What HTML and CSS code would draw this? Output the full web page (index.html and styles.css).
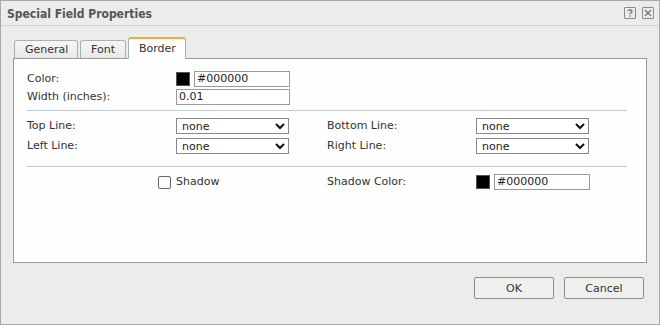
FILE: index.html
```html
<!DOCTYPE html>
<html>
<head>
<meta charset="utf-8">
<link rel="stylesheet" href="styles.css">
</head>
<body>
<div class="dialog">
  <div class="titlebar">
    <span class="title">Special Field Properties</span>
    <div class="title-icons">
      <span class="ticon">
        <svg width="10" height="10" viewBox="0 0 10 10"><path d="M3 3.2 C3 1.6 7 1.6 7 3.4 C7 4.8 5 4.8 5 6.3" fill="none" stroke="#777" stroke-width="1.4"/><rect x="4.3" y="7.3" width="1.4" height="1.4" fill="#777"/></svg>
      </span>
      <span class="ticon">
        <svg width="10" height="10" viewBox="0 0 10 10"><path d="M2 2 L8 8 M8 2 L2 8" stroke="#777" stroke-width="1.4"/></svg>
      </span>
    </div>
  </div>
  <div class="body">
    <div class="tabs">
      <div class="tab">General</div>
      <div class="tab">Font</div>
      <div class="tab active">Border</div>
    </div>
    <div class="panel">
      <div class="grid top">
        <div class="label">Color:</div>
        <div class="ctrl span3">
          <span class="swatch"></span>
          <span class="input short">#000000</span>
        </div>
        <div class="label">Width (inches):</div>
        <div class="ctrl span3"><span class="input wide">0.01</span></div>
      </div>
      <div class="sep"></div>
      <div class="grid lines">
        <div class="label">Top Line:</div>
        <div class="ctrl"><span class="select"><span>none</span><svg width="10" height="7" viewBox="0 0 10 7"><path d="M1 1 L5 5 L9 1" fill="none" stroke="#111" stroke-width="2"/></svg></span></div>
        <div class="label">Bottom Line:</div>
        <div class="ctrl"><span class="select"><span>none</span><svg width="10" height="7" viewBox="0 0 10 7"><path d="M1 1 L5 5 L9 1" fill="none" stroke="#111" stroke-width="2"/></svg></span></div>
        <div class="label">Left Line:</div>
        <div class="ctrl"><span class="select"><span>none</span><svg width="10" height="7" viewBox="0 0 10 7"><path d="M1 1 L5 5 L9 1" fill="none" stroke="#111" stroke-width="2"/></svg></span></div>
        <div class="label">Right Line:</div>
        <div class="ctrl"><span class="select"><span>none</span><svg width="10" height="7" viewBox="0 0 10 7"><path d="M1 1 L5 5 L9 1" fill="none" stroke="#111" stroke-width="2"/></svg></span></div>
      </div>
      <div class="sep sep2"></div>
      <div class="grid shadow">
        <div class="check-cell"><span class="checkbox"></span></div>
        <div class="label">Shadow</div>
        <div class="label">Shadow Color:</div>
        <div class="ctrl">
          <span class="swatch"></span>
          <span class="input short">#000000</span>
        </div>
      </div>
    </div>
    <div class="buttons">
      <button class="btn">OK</button>
      <button class="btn">Cancel</button>
    </div>
  </div>
</div>
</body>
</html>
```
FILE: styles.css
```css
html, body {
  margin: 0;
  padding: 0;
}
body {
  width: 660px;
  height: 325px;
  font-family: "DejaVu Sans", "Liberation Sans", sans-serif;
  font-size: 11px;
  color: #333;
}
.dialog {
  box-sizing: border-box;
  width: 660px;
  height: 325px;
  border: 1px solid #a8a8a8;
  background: #ececea;
  display: flex;
  flex-direction: column;
}
.titlebar {
  height: 24px;
  border-bottom: 1px solid #d2d2d0;
  display: flex;
  align-items: center;
  justify-content: space-between;
  padding: 0 5px 0 6px;
}
.title {
  font-weight: bold;
  font-size: 12px;
  font-stretch: condensed;
  color: #555;
  margin-top: 1px;
}
.title-icons {
  display: flex;
  gap: 6px;
}
.ticon {
  box-sizing: border-box;
  width: 12px;
  height: 12px;
  border: 1px solid #8a8a8a;
  border-radius: 1px;
  display: flex;
  align-items: center;
  justify-content: center;
}
.body {
  flex: 1;
  padding: 11px 12px 0 12px;
  display: flex;
  flex-direction: column;
}
.tabs {
  display: flex;
  align-items: flex-end;
  height: 21px;
  padding-left: 1px;
  gap: 2px;
  position: relative;
  z-index: 1;
}
.tab {
  box-sizing: border-box;
  height: 18px;
  border: 1px solid #a6b0b8;
  border-bottom: none;
  border-radius: 3px 3px 0 0;
  background: linear-gradient(#f6f6f4, #e8e8e6);
  padding: 0 10px;
  line-height: 18px;
  color: #333;
}
.tab:first-child { width: 64px; }
.tab:nth-child(2) { width: 46px; }
.tab.active {
  height: 22px;
  width: 58px;
  margin-bottom: -1px;
  background: #fff;
  border-top: 2px solid #f4a93b;
  line-height: 19px;
}
.panel {
  box-sizing: border-box;
  height: 205px;
  background: #fefefe;
  border: 1px solid #9a9a9a;
  padding: 12px 20px 0 13px;
}
.grid {
  display: grid;
  grid-template-columns: 149px 151px 149px 1fr;
  align-items: center;
  grid-auto-rows: 16px;
}
.top { row-gap: 2px; }
.span3 { grid-column: 2 / span 3; }
.lines { row-gap: 4px; }
.label {
  white-space: nowrap;
  line-height: 16px;
}
.ctrl {
  display: flex;
  align-items: center;
  gap: 4px;
  height: 16px;
}
.swatch {
  box-sizing: border-box;
  width: 14px;
  height: 14px;
  background: #000;
  border: 1px solid #555;
}
.input {
  box-sizing: border-box;
  height: 16px;
  border: 1px solid #999;
  background: #fff;
  padding: 0 2px;
  line-height: 14px;
  color: #222;
}
.input.short { width: 96px; }
.input.wide { width: 114px; }
.select {
  box-sizing: border-box;
  width: 113px;
  height: 16px;
  border: 1px solid #8a8a8a;
  background: #fff;
  display: flex;
  align-items: center;
  justify-content: space-between;
  padding: 0 3px 0 5px;
  color: #222;
}
.sep {
  height: 1px;
  background: #c0ccd4;
  margin: 5px 0 7px 0;
  width: 600px;
}
.sep2 { margin-top: 12px; }
.check-cell {
  display: flex;
  justify-content: flex-end;
  padding-right: 5px;
}
.checkbox {
  box-sizing: border-box;
  width: 13px;
  height: 13px;
  border: 1px solid #666;
  border-radius: 2px;
  background: #fff;
}
.buttons {
  display: flex;
  justify-content: flex-end;
  gap: 10px;
  padding: 14px 3px 0 0;
}
.btn {
  box-sizing: border-box;
  width: 80px;
  height: 22px;
  border: 1px solid #8c8c8c;
  border-radius: 2px;
  background: #efefed;
  font-family: inherit;
  font-size: 11px;
  color: #333;
  padding: 0;
}
```
